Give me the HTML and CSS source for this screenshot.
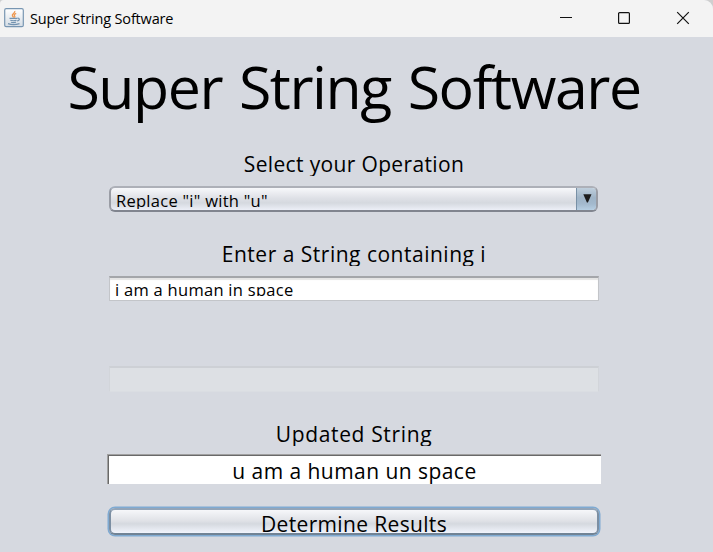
FILE: index.html
```html
<!DOCTYPE html>
<html lang="en">
<head>
<meta charset="utf-8">
<title>Super String Software</title>
<link rel="stylesheet" href="styles.css">
</head>
<body>
<div class="window">
  <header class="titlebar">
    <svg class="app-icon" width="20" height="20" viewBox="0 0 20 20">
      <defs><linearGradient id="tile" x2="0" y2="1"><stop stop-color="#fff"/><stop offset="1" stop-color="#d5dde5"/></linearGradient></defs>
      <rect x=".7" y=".7" width="18.6" height="18" rx="1.5" fill="url(#tile)" stroke="#7896b2" stroke-width="1.2"/>
      <path d="M10.8 3c.6 2-3.3 2.900-2.400 4.700.3.700 1 1.100 1.200 1.900M12.200 5.400c-2 .8-2.400 1.700-1.500 2.700.4.500.1 1-.4 1.400" fill="none" stroke="#ee9850" stroke-width="1.3"/>
      <path d="M5.500 10.300h7.500M6.300 12.300q3 .9 6.200 0M7 14.200q2.500.8 5 0M4 15.600q5.500 2 11.500 0M13.300 10.300c3-.6 2.500 2.400-.3 2.700" fill="none" stroke="#7393b0" stroke-width="1.200"/>
    </svg>
    <span class="caption">Super String Software</span>
    <svg class="controls" width="136" height="16" viewBox="0 0 136 16">
      <path d="M3 7.500h12" stroke="#111" stroke-width="1"/>
      <rect x="61.600" y="2.600" width="10.800" height="10.800" rx="1" fill="none" stroke="#111" stroke-width="1.200"/>
      <path d="M120.200 2.200l11.600 11.600M131.800 2.200l-11.600 11.600" stroke="#111" stroke-width="1.200"/>
    </svg>
  </header>
  <main class="content">
    <h1 class="title"><span>Super String Software</span></h1>
    <div class="label label-select"><span>Select your Operation</span></div>
    <div class="combo">
      <div class="combo-value"><span>Replace "i" with "u"</span></div>
      <div class="combo-arrow"><svg width="9" height="9" viewBox="0 0 9 9"><path d="M.3.300h8.200L4.900 8.500h-1z" fill="#1c1c1c"/></svg></div>
    </div>
    <div class="label label-enter"><span>Enter a String containing i</span></div>
    <div class="field"><div class="field-text"><span>i am a human in space</span></div></div>
    <div class="field-disabled"></div>
    <div class="label label-updated"><span>Updated String</span></div>
    <div class="output"><span>u am a human un space</span></div>
    <button class="run"><span>Determine Results</span></button>
  </main>
</div>
</body>
</html>
```
FILE: styles.css
```css
* { box-sizing: border-box; }
body {
  margin: 0;
  background: #cfcfcf;
  font-family: "Open Sans", "Noto Sans", sans-serif;
  color: #000;
  overflow: hidden;
}
.window {
  width: 713px;
  height: 552px;
  background: #d6d9e0;
  border-radius: 4px 9px 0 0;
  overflow: hidden;
}
.titlebar {
  height: 37px;
  display: flex;
  align-items: center;
  background: #f3f3f3;
  padding: 0 20px 0 4px;
}
.app-icon { margin-top: -2px; }
.caption { margin-left: 6px; font-size: 14.500px; letter-spacing: -0.170px; white-space: nowrap; }
.controls { margin-left: auto; margin-top: -1px; }
.content { display: flex; flex-direction: column; align-items: center; padding-right: 5px; }
span { display: inline-block; white-space: nowrap; }
.title {
  margin: 9px 0 0;
  height: 80px;
  line-height: 80px;
  font-size: 59px;
  font-weight: 400;
  letter-spacing: -1.450px;
  word-spacing: 3px;
}
.label { height: 24px; line-height: 24px; font-size: 21px; overflow: hidden; }
.label-select { margin-top: 26px; letter-spacing: 0.350px; }
.label-enter { margin-top: 30px; letter-spacing: 0.500px; }
.label-updated { margin-top: 30px; letter-spacing: 0.650px; }
.combo {
  width: 489px;
  height: 26px;
  margin: 10px 1px 0 0;
  display: flex;
  border: 2px solid;
  border-color: #adb0b8 #9a9da5 #81858f #9a9da5;
  border-radius: 6px;
  background: linear-gradient(#f7f8fb, #dfe1e7 45%, #d5d9df 68%, #eceff7);
  overflow: hidden;
}
.combo-value {
  flex: 1;
  height: 21px;
  line-height: 25px;
  font-size: 16.500px;
  letter-spacing: 0.270px;
  padding-left: 5px;
  overflow: hidden;
}
.combo-arrow {
  width: 21px;
  margin: -1px -1px -1px 0;
  border-left: 1px solid #7890a6;
  border-right: 1px solid #526c85;
  border-radius: 0 4px 4px 0;
  background: linear-gradient(#c3d2df, #9fb4c7 45%, #a3b9cd 70%, #bad3e7);
  padding: 7px 0 0 6px;
  line-height: 0;
}
.field {
  width: 490px;
  height: 25px;
  margin-top: 10px;
  background: #fff;
  border: 1px solid #c3c5c9;
  border-top: 2px solid #a4a6aa;
  box-shadow: inset 0 2px 1px #e4e4e4;
  padding-left: 5px;
}
.field-text {
  height: 18px;
  line-height: 24px;
  font-size: 16.500px;
  letter-spacing: 0.280px;
  overflow: hidden;
}
.field-disabled {
  width: 490px;
  height: 26px;
  margin-top: 65px;
  background: #dde0e4;
  border: 1px solid #d2d5da;
  border-top: 2px solid #cdd0d5;
  border-bottom-color: #dadde2;
}
.output {
  width: 494px;
  height: 30px;
  margin-top: 8px;
  background: #fff;
  border-top: 1px solid #a0a0a0;
  border-left: 1px solid #a0a0a0;
  box-shadow: inset 1px 1px #696969;
  text-align: center;
  font-size: 21px;
  line-height: 32px;
  letter-spacing: 0.450px;
  overflow: hidden;
}
.run {
  width: 490px;
  height: 27px;
  margin: 24px 0 0;
  padding: 0;
  border: 2px solid;
  border-color: #93a5b9 #7c8fa3 #718395 #7c8fa3;
  border-radius: 6px;
  box-shadow: 0 0 0 1.500px #7faad2;
  background: linear-gradient(#f6f7fa, #dfe1e6 48%, #d5d9df 60%, #f1f4fc);
  font: 21px/28px "Open Sans", "Noto Sans", sans-serif;
  letter-spacing: 0.350px;
  color: #000;
  overflow: hidden;
}
.run span { display: block; height: 23px; overflow: hidden; }
```
